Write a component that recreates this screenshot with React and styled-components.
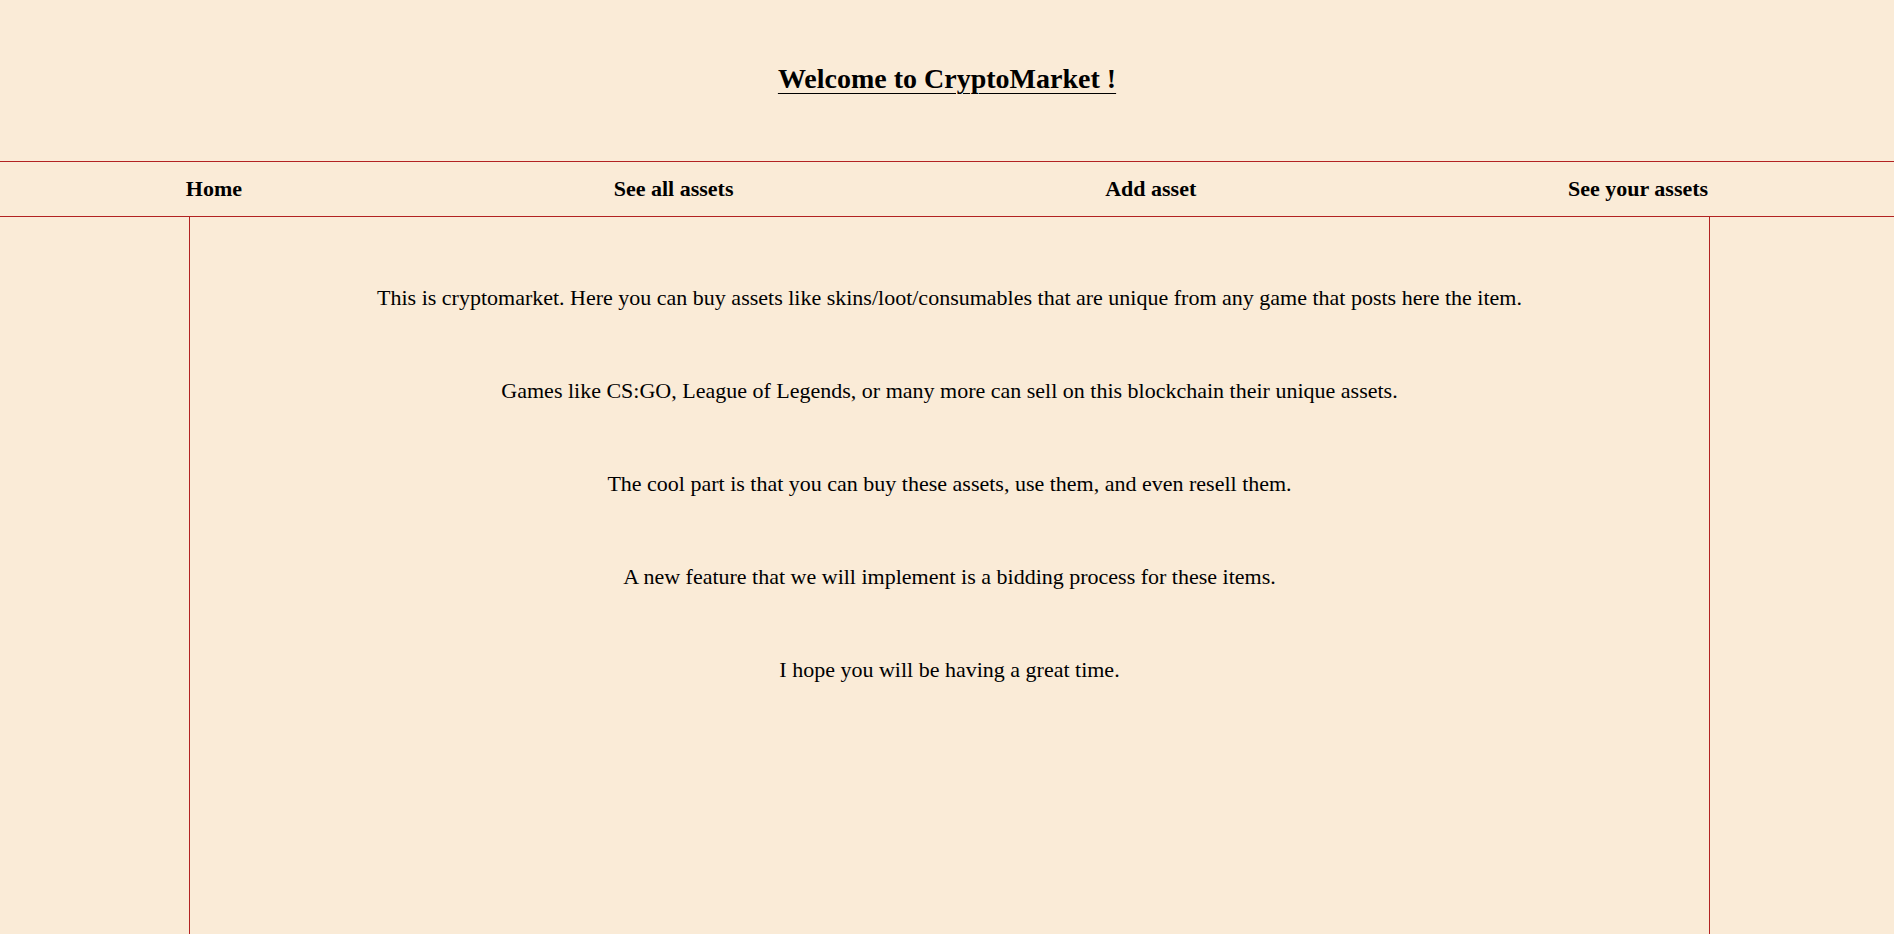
import React from "react";
import styled, { createGlobalStyle } from "styled-components";

const GlobalStyle = createGlobalStyle`
  html, body {
    margin: 0;
    padding: 0;
    background: #faebd7;
  }
  body {
    font-family: "Liberation Serif", "Times New Roman", serif;
    color: #000;
  }
`;

const Page = styled.div`
  min-height: 100vh;
  display: flex;
  flex-direction: column;
`;

const Header = styled.header`
  height: 161px;
  display: flex;
  align-items: center;
  justify-content: center;
`;

const Title = styled.h1`
  margin: 0 0 4px;
  font-size: 28px;
  font-weight: bold;
  text-decoration: underline;
  text-underline-offset: 5px;
  text-decoration-thickness: 1px;
`;

const Nav = styled.nav`
  height: 54px;
  display: flex;
  align-items: center;
  justify-content: space-around;
  border-top: 1px solid #b22222;
  border-bottom: 1px solid #b22222;
`;

const NavLink = styled.a`
  font-size: 22px;
  font-weight: bold;
  color: #000;
  text-decoration: none;
  cursor: pointer;
`;

const Content = styled.main`
  flex: 1;
  margin: 0 calc(10% - 5px) 0 10%;
  border-left: 1px solid #b22222;
  border-right: 1px solid #b22222;
  padding-top: 68px;
  display: flex;
  flex-direction: column;
  align-items: center;
  gap: 68px;
`;

const Paragraph = styled.p`
  margin: 0;
  font-size: 22px;
  line-height: 25px;
  text-align: center;
`;

const links = ["Home", "See all assets", "Add asset", "See your assets"];

const paragraphs = [
  "This is cryptomarket. Here you can buy assets like skins/loot/consumables that are unique from any game that posts here the item.",
  "Games like CS:GO, League of Legends, or many more can sell on this blockchain their unique assets.",
  "The cool part is that you can buy these assets, use them, and even resell them.",
  "A new feature that we will implement is a bidding process for these items.",
  "I hope you will be having a great time.",
];

export default function App() {
  return (
    <>
      <GlobalStyle />
      <Page>
        <Header>
          <Title>Welcome to CryptoMarket !</Title>
        </Header>
        <Nav>
          {links.map((l) => (
            <NavLink key={l}>{l}</NavLink>
          ))}
        </Nav>
        <Content>
          {paragraphs.map((p, i) => (
            <Paragraph key={i}>{p}</Paragraph>
          ))}
        </Content>
      </Page>
    </>
  );
}
